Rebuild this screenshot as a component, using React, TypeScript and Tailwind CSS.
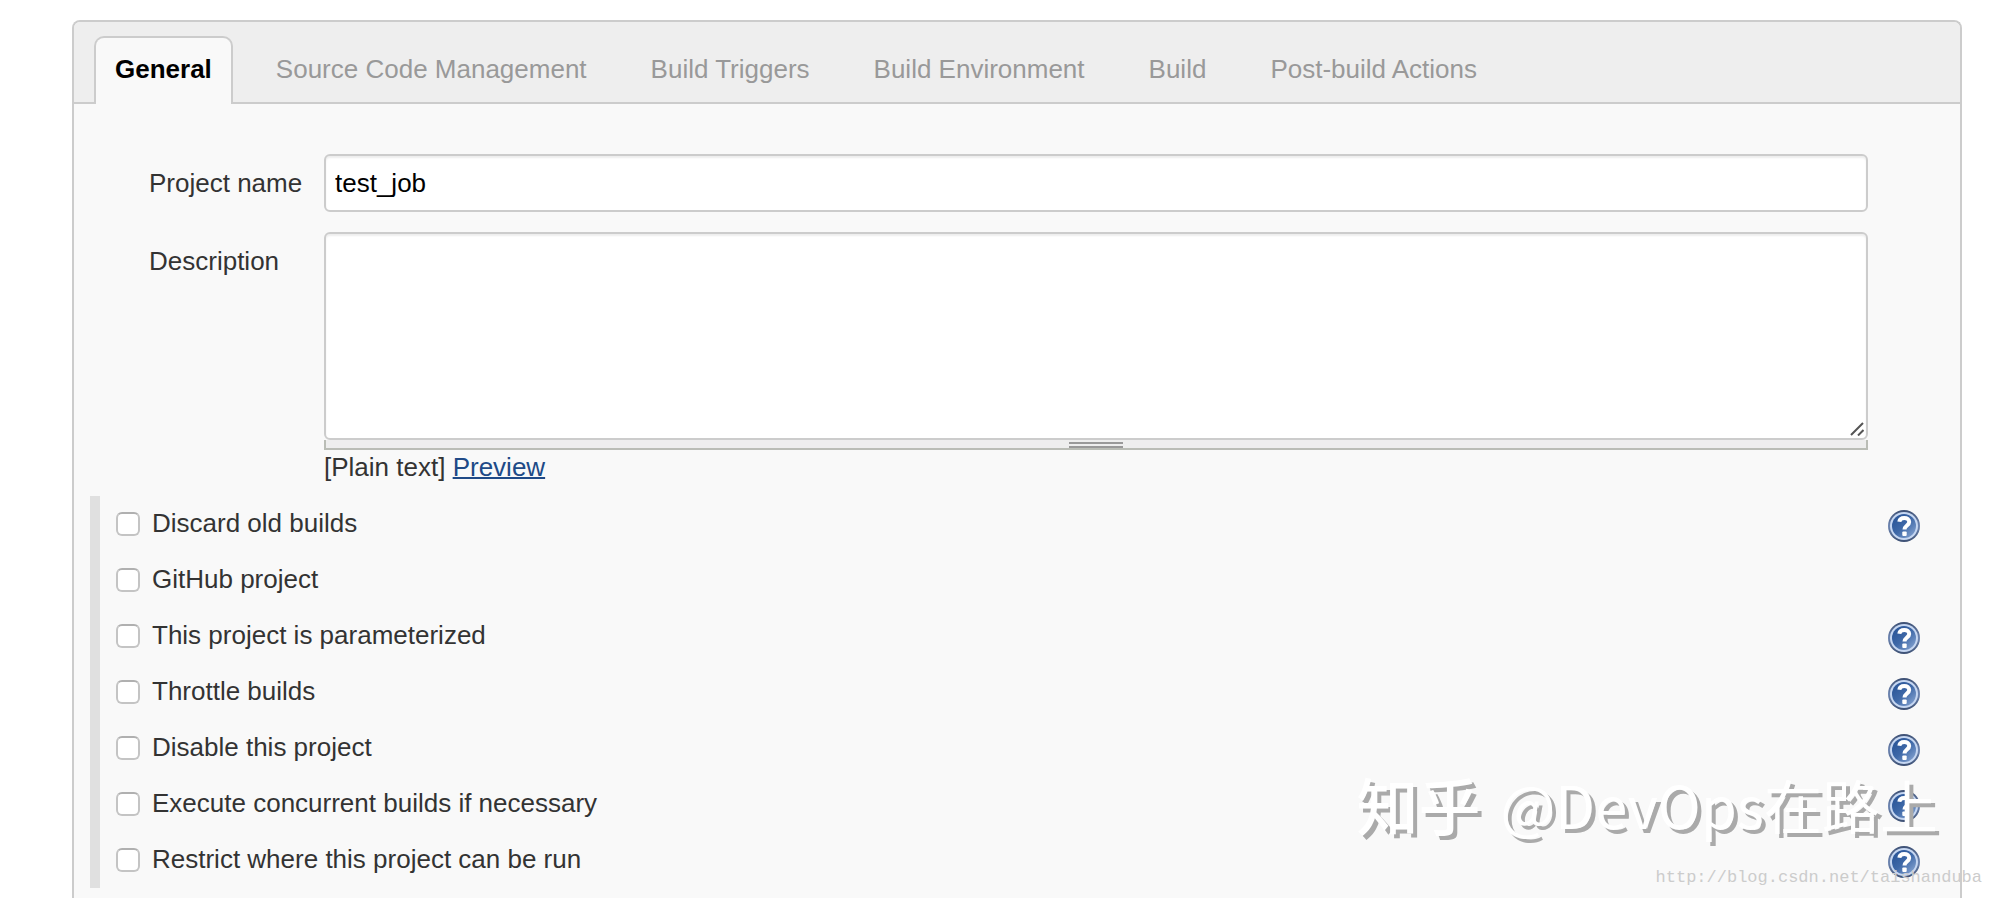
import { useState } from 'react';

interface JobOption {
  id: string;
  label: string;
  hasHelp: boolean;
}

const TABS = [
  'General',
  'Source Code Management',
  'Build Triggers',
  'Build Environment',
  'Build',
  'Post-build Actions',
];

const OPTIONS: JobOption[] = [
  { id: 'discard', label: 'Discard old builds', hasHelp: true },
  { id: 'github', label: 'GitHub project', hasHelp: false },
  { id: 'parameterized', label: 'This project is parameterized', hasHelp: true },
  { id: 'throttle', label: 'Throttle builds', hasHelp: true },
  { id: 'disable', label: 'Disable this project', hasHelp: true },
  { id: 'concurrent', label: 'Execute concurrent builds if necessary', hasHelp: true },
  { id: 'restrict', label: 'Restrict where this project can be run', hasHelp: true },
];

function HelpIcon() {
  return (
    <svg viewBox="0 0 32 32" className="block size-8" aria-hidden="true">
      <defs>
        <linearGradient id="help-fill" x1="0" y1="0" x2="1" y2="1">
          <stop offset="0.2" stopColor="#2f5a9c" />
          <stop offset="0.5" stopColor="#3f69a8" />
          <stop offset="1" stopColor="#8fabd6" />
        </linearGradient>
        <linearGradient id="help-rim" x1="0" y1="0" x2="0" y2="1">
          <stop offset="0" stopColor="#3c4f73" />
          <stop offset="0.5" stopColor="#6f87b3" />
          <stop offset="1" stopColor="#3c4f73" />
        </linearGradient>
      </defs>
      <circle cx="16" cy="16" r="16" fill="url(#help-rim)" />
      <circle cx="16" cy="16" r="14" fill="#c6d7f2" />
      <circle cx="16" cy="16" r="12" fill="url(#help-fill)" />
      <path
        d="M11.300 11.800C11.700 8.900 13.700 8 16.200 8c3 0 5 1.500 5 4 0 3.500-4.700 3.600-4.700 7.600"
        fill="none"
        stroke="#fff"
        strokeWidth="4"
      />
      <rect x="14.300" y="21.500" width="4.400" height="4.400" rx="1" fill="#fff" />
    </svg>
  );
}

function TabBar({ active, onSelect }: { active: string; onSelect: (tab: string) => void }) {
  return (
    <div
      role="tablist"
      className="flex gap-[22px] rounded-t-md border-b-2 border-[#cccccc] bg-[#eeeeee] pt-3.5 pl-5"
    >
      {TABS.map((tab) => (
        <button
          key={tab}
          type="button"
          role="tab"
          aria-selected={tab === active}
          onClick={() => onSelect(tab)}
          className={`-mb-0.5 rounded-t-[10px] border-2 border-b-0 px-[19px] pt-4 pb-5 whitespace-nowrap ${
            tab === active
              ? 'border-[#cccccc] bg-[#f9f9f9] font-bold text-black'
              : 'border-transparent text-[#999999]'
          }`}
        >
          {tab}
        </button>
      ))}
    </div>
  );
}

function OptionRow({ option }: { option: JobOption }) {
  return (
    <div className="flex h-14 items-center pr-10 pl-4">
      <input
        id={option.id}
        type="checkbox"
        className="mr-3 size-6 appearance-none rounded-md border-2 border-[#c4c4c4] border-t-[#b0b0b0] bg-white checked:bg-[#204a87]"
      />
      <label htmlFor={option.id} className="grow pb-0.5">
        {option.label}
      </label>
      {option.hasHelp && (
        <button type="button" aria-label={`Help for feature: ${option.label}`} className="pt-1">
          <HelpIcon />
        </button>
      )}
    </div>
  );
}

export default function App() {
  const [activeTab, setActiveTab] = useState('General');
  const [name, setName] = useState('test_job');
  const [description, setDescription] = useState('');

  return (
    <div className="relative flex min-h-screen flex-col overflow-hidden bg-white pt-5 pr-[30px] pl-[72px] font-['Liberation_Sans',Arial,sans-serif] text-[26px] leading-[30px] text-[#333333]">
      <main className="grow rounded-t-lg border-2 border-b-0 border-[#cccccc] bg-[#f9f9f9]">
        <TabBar active={activeTab} onSelect={setActiveTab} />

        <form onSubmit={(e) => e.preventDefault()}>
          <div className="grid grid-cols-[175px_1fr] gap-y-5 pt-[50px] pr-[92px] pb-3.5 pl-[75px]">
            <label htmlFor="name" className="pt-3.5">
              Project name
            </label>
            <input
              id="name"
              type="text"
              value={name}
              onChange={(e) => setName(e.target.value)}
              className="w-full rounded-md border-2 border-[#cccccc] bg-white px-[9px] py-3 text-black shadow-[inset_0_2px_2px_#eeeeee] outline-none"
            />

            <label htmlFor="description" className="pt-3.5">
              Description
            </label>
            <div>
              <div className="relative">
                <textarea
                  id="description"
                  value={description}
                  onChange={(e) => setDescription(e.target.value)}
                  className="block h-52 w-full resize-none rounded-md border-2 border-[#cccccc] bg-white px-[9px] py-3 text-black shadow-[inset_0_2px_2px_#eeeeee] outline-none"
                />
                <svg
                  viewBox="0 0 14 14"
                  className="pointer-events-none absolute right-1 bottom-1 size-3.5"
                  stroke="#555555"
                  strokeWidth="2"
                  aria-hidden="true"
                >
                  <path d="M1 13 13 1M8 13.500 13.500 8" />
                </svg>
              </div>
              {/* drag bar under the textarea */}
              <div className="flex h-2.5 flex-col items-center gap-0.5 border-2 border-t-0 border-[#babdb6] bg-[#eeeeee] pt-0.5">
                <div className="h-0.5 w-[54px] shrink-0 bg-[#999999]" />
                <div className="h-0.5 w-[54px] shrink-0 bg-[#999999]" />
              </div>
              <div className="pt-0.5">
                [Plain text]{' '}
                <a href="#preview" className="text-[#204a87] underline decoration-2">
                  Preview
                </a>
              </div>
            </div>
          </div>

          <div className="ml-4 border-l-10 border-[#e0e0e0]">
            {OPTIONS.map((option) => (
              <OptionRow key={option.id} option={option} />
            ))}
          </div>
        </form>
      </main>

      <div className="pointer-events-none absolute right-[54px] bottom-16 flex items-center gap-5 font-['Noto_Sans_CJK_SC',sans-serif] text-[58px] leading-[60px] whitespace-nowrap text-white [text-shadow:4px_4px_0_#aaaaaa]">
        <span className="text-[62px] font-medium">知乎</span>
        <span>@DevOps在路上</span>
      </div>
      <div className="pointer-events-none absolute right-2.5 bottom-2 font-['Liberation_Mono',monospace] text-[17px] leading-6 text-[#cccccc]">
        http://blog.csdn.net/taishanduba
      </div>
    </div>
  );
}
